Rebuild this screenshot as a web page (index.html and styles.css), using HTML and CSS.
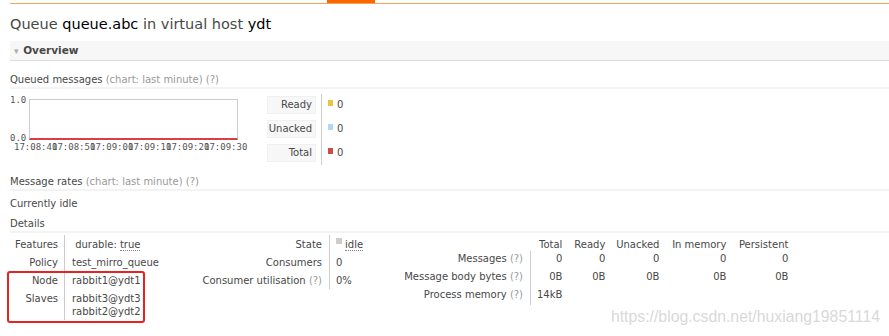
FILE: index.html
```html
<!DOCTYPE html>
<html lang="en">
  <head>
    <meta charset="UTF-8" />
    <title>Queue queue.abc</title>
    <link rel="stylesheet" href="styles.css">
  </head>
  <body>
    <div class="topbar"><span class="tab-active"></span></div>
    <div class="main">
      <h1>Queue <b>queue.abc</b> in virtual host <b>ydt</b></h1>

      <div class="section-head"><span class="arrow">&#9662;</span> Overview</div>

      <h3 class="queued">Queued messages <span class="help">(chart: last minute) (?)</span></h3>
      <div class="chart-row">
        <div class="chart">
          <div class="plot-wrap">
            <div class="y-axis">
              <span>1.0</span>
              <span>0.0</span>
            </div>
            <div class="plot"></div>
          </div>
          <div class="x-axis">
            <span>17:08:40</span>
            <span>17:08:50</span>
            <span>17:09:00</span>
            <span>17:09:10</span>
            <span>17:09:20</span>
            <span>17:09:30</span>
          </div>
        </div>
        <div class="legend">
          <div class="legend-labels">
            <span>Ready</span>
            <span>Unacked</span>
            <span>Total</span>
          </div>
          <div class="legend-values">
            <span><i class="swatch ready"></i>0</span>
            <span><i class="swatch unacked"></i>0</span>
            <span><i class="swatch total"></i>0</span>
          </div>
        </div>
      </div>

      <h3 class="rates">Message rates <span class="help">(chart: last minute) (?)</span></h3>
      <p class="idle">Currently idle</p>
      <h3 class="details-title">Details</h3>

      <div class="details">
        <div class="facts-wrap">
          <table class="facts">
            <tr>
              <th>Features</th>
              <td>&nbsp;durable: <abbr>true</abbr></td>
            </tr>
            <tr>
              <th>Policy</th>
              <td>test_mirro_queue</td>
            </tr>
            <tr>
              <th>Node</th>
              <td>rabbit1@ydt1</td>
            </tr>
            <tr>
              <th>Slaves</th>
              <td>rabbit3@ydt3<br>rabbit2@ydt2</td>
            </tr>
          </table>
          <div class="mark"></div>
        </div>

        <table class="facts state">
          <tr>
            <th>State</th>
            <td><span class="state-box"></span><abbr>idle</abbr></td>
          </tr>
          <tr>
            <th>Consumers</th>
            <td>0</td>
          </tr>
          <tr>
            <th>Consumer utilisation <span class="help">(?)</span></th>
            <td>0%</td>
          </tr>
        </table>

        <table class="facts counts">
          <tr class="head">
            <th></th>
            <td class="c-total">Total</td>
            <td class="c-ready">Ready</td>
            <td class="c-unacked">Unacked</td>
            <td class="c-memory">In memory</td>
            <td class="c-persistent">Persistent</td>
          </tr>
          <tr>
            <th>Messages <span class="help">(?)</span></th>
            <td class="c-total">0</td>
            <td>0</td>
            <td>0</td>
            <td>0</td>
            <td>0</td>
          </tr>
          <tr>
            <th>Message body bytes <span class="help">(?)</span></th>
            <td class="c-total">0B</td>
            <td>0B</td>
            <td>0B</td>
            <td>0B</td>
            <td>0B</td>
          </tr>
          <tr>
            <th>Process memory <span class="help">(?)</span></th>
            <td class="c-total">14kB</td>
            <td></td>
            <td></td>
            <td></td>
            <td></td>
          </tr>
        </table>
      </div>
    </div>
    <div class="watermark">https://blog.csdn.net/huxiang19851114</div>
  </body>
</html>
```

FILE: styles.css
```css
body {
  margin: 0;
  font-family: "DejaVu Sans", Verdana, sans-serif;
  font-size: 10px;
  color: #484848;
  background: #fff;
  position: relative;
  height: 336px;
  overflow: hidden;
}
.topbar {
  margin-left: 10px;
  height: 3px;
  border-bottom: 1px solid #f0a550;
  display: flex;
}
.tab-active {
  margin-left: 317px;
  width: 48px;
  height: 3px;
  background: #ff6600;
}
.main {
  padding-left: 10px;
}
h1 {
  margin: 11px 0 0;
  font-size: 14.5px;
  line-height: 18px;
  font-weight: normal;
  color: #484848;
}
h1 b {
  font-weight: normal;
  color: #000;
}
.section-head {
  margin-top: 8px;
  height: 19px;
  line-height: 18px;
  background: #f7f7f7;
  border-bottom: 1px solid #ddd;
  font-weight: bold;
  font-size: 10.5px;
  color: #484848;
  padding-left: 4px;
}
.arrow {
  color: #aaa;
  font-size: 9px;
  margin-right: 1px;
}
h3 {
  margin: 0;
  font-size: 10px;
  line-height: 12px;
  font-weight: normal;
  padding: 10px 0 1px;
  border-bottom: 2px solid #f3f3f3;
}
h3.queued {
  padding-top: 13px;
}
h3.rates {
  padding-top: 11px;
}
.help {
  color: #999;
}
.chart-row {
  display: flex;
  margin-top: 6px;
}
.chart {
  width: 257px;
}
.plot-wrap {
  display: flex;
}
.y-axis {
  display: flex;
  flex-direction: column;
  justify-content: space-between;
  width: 19px;
  height: 48px;
  font-family: "DejaVu Sans Mono", monospace;
  font-size: 9px;
  line-height: 10px;
  color: #555;
}
.plot {
  width: 207px;
  height: 38px;
  margin-top: 4px;
  border: 1px solid #ccc;
  border-bottom: 2px solid #d94040;
}
.x-axis {
  display: flex;
  margin: -1px 0 0 4px;
  font-family: "DejaVu Sans Mono", monospace;
  font-size: 9px;
  line-height: 10px;
  color: #555;
}
.x-axis span {
  width: 38px;
  flex: none;
  white-space: nowrap;
}
.legend {
  display: flex;
  margin-top: -1px;
}
.legend-labels,
.legend-values {
  display: flex;
  flex-direction: column;
  gap: 6px;
  padding: 2px 0 3px;
}
.legend-labels span {
  width: 44px;
  height: 16px;
  line-height: 16px;
  text-align: right;
  padding-right: 3px;
  background: #f7f7f7;
  border: 1px solid #f0f0f0;
}
.legend-values {
  margin-left: 5px;
  border-left: 1px solid #ccc;
  padding-left: 6px;
}
.legend-values span {
  height: 18px;
  line-height: 18px;
}
.swatch {
  display: inline-block;
  width: 5px;
  height: 6px;
  margin-right: 4px;
  vertical-align: 2px;
}
.ready {
  background: #edc240;
}
.unacked {
  background: #afd8f8;
}
.total {
  background: #cb4b4b;
}
.idle {
  margin: 7px 0 0;
  line-height: 12px;
}
h3.details-title {
  padding-top: 8px;
}
.details {
  display: flex;
  align-items: flex-start;
  margin-top: 2px;
}
.facts {
  border-collapse: collapse;
}
.facts th {
  font-weight: normal;
  text-align: right;
  white-space: nowrap;
  padding: 2.5px 6px 2.5px 0;
  border-right: 1px solid #ccc;
  vertical-align: top;
  line-height: 13px;
}
.facts td {
  padding: 2.5px 0 2.5px 7px;
  vertical-align: top;
  white-space: nowrap;
  line-height: 13px;
}
.facts-wrap {
  position: relative;
  width: 150px;
  flex: none;
}
.facts-wrap .facts th {
  width: 48px;
}
abbr {
  text-decoration: none;
  border-bottom: 1px dotted #888;
}
.mark {
  position: absolute;
  left: -3px;
  top: 36px;
  width: 134px;
  height: 48px;
  border: 2px solid #e8221e;
  border-radius: 3px;
}
.state th {
  width: 162px;
  padding-right: 7px;
}
.state td {
  width: 44px;
  padding-left: 6px;
}
.state-box {
  display: inline-block;
  width: 6px;
  height: 6px;
  background: #ccc;
  margin-right: 3px;
  vertical-align: 4px;
}
.counts th {
  width: 143px;
  padding: 1px 7px 4px 0;
}
.counts .head th {
  border-right: none;
}
.counts td {
  text-align: right;
  padding: 1px 0 4px 10px;
}
.counts .head td {
  padding: 2.5px 0 0 10px;
}
.counts td.c-total,
.counts .head td.c-total {
  width: 25px;
  padding-left: 6px;
}
.c-ready {
  width: 33px;
}
.c-unacked {
  width: 44px;
}
.c-memory {
  width: 57px;
}
.c-persistent {
  width: 52px;
}
.watermark {
  position: absolute;
  right: 9px;
  bottom: 10px;
  font-family: "Liberation Sans", Arial, sans-serif;
  font-size: 15.8px;
  color: #d9d9d9;
}
```
